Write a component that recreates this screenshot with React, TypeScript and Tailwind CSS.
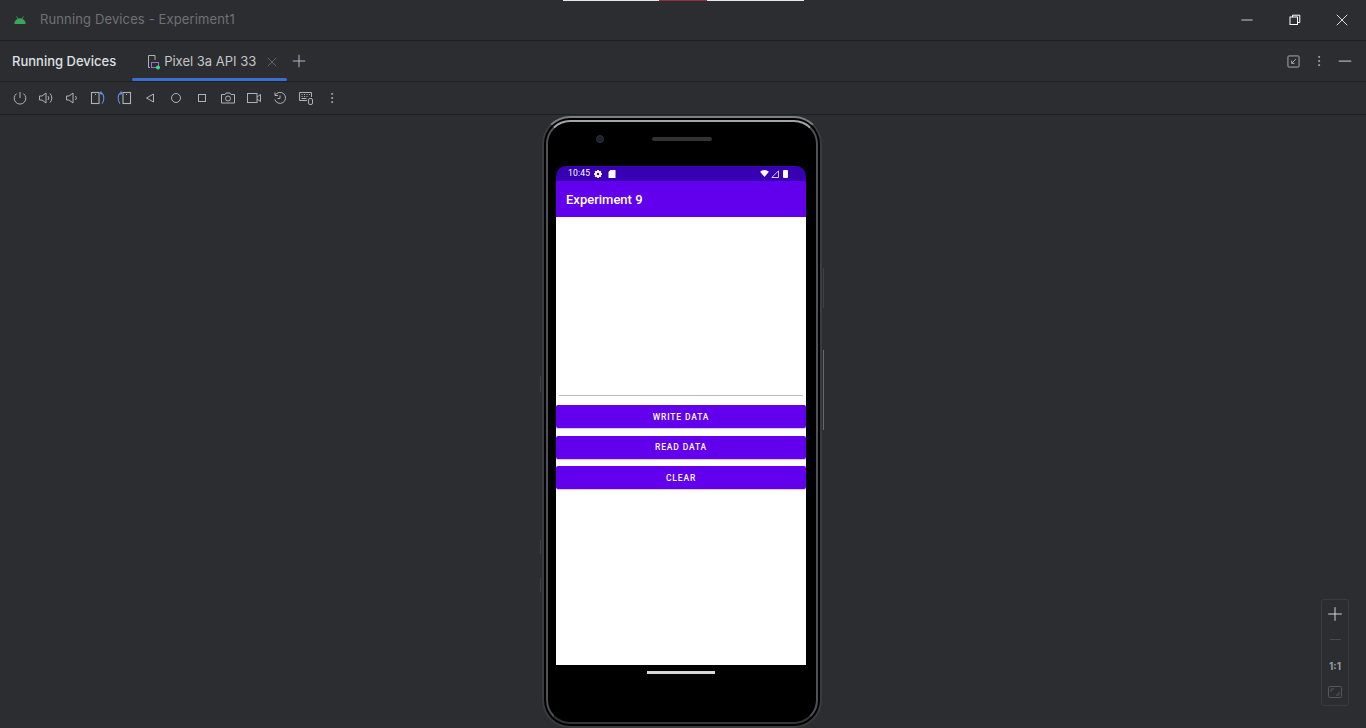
import { Plus, X, Minus, MoreVertical } from 'lucide-react'

const iconClass = 'w-4 h-4'

function Icon({ children, color = '#afb1b3' }: { children: React.ReactNode; color?: string }) {
  return (
    <svg viewBox="0 0 16 16" fill="none" stroke={color} strokeWidth="1" className={iconClass}>
      {children}
    </svg>
  )
}

const BLUE = '#5c8fe8'

const toolbar = [
  { x: 20, el: <Icon><path d="M8 2v6" /><path d="M4.600 3.600a5.800 5.800 0 1 0 6.800 0" /></Icon> },
  { x: 46, el: <Icon><path d="M1.500 6h2.500L8 3v10L4 10H1.500z" /><path d="M10 6a3 3 0 0 1 0 4" /><path d="M12 3.500a6.500 6.500 0 0 1 0 9" /></Icon> },
  { x: 71, el: <Icon><path d="M2.500 6h2.500L9 3v10L5 10H2.500z" /><path d="M11.500 6a3 3 0 0 1 0 4" /></Icon> },
  {
    x: 98,
    el: (
      <svg viewBox="0 0 16 16" fill="none" strokeWidth="1.100" className={iconClass}>
        <rect x="1.500" y="2.500" width="7.500" height="11" stroke="#afb1b3" />
        <path d="M5 4.500h1" stroke="#afb1b3" />
        <path d="M10.500 3h1c3 1.500 3 8 .5 10.500M11.500 1.500l-1.500 1.500 1.500 1.500" stroke={BLUE} />
      </svg>
    ),
  },
  {
    x: 124,
    el: (
      <svg viewBox="0 0 16 16" fill="none" strokeWidth="1.100" className={iconClass}>
        <rect x="7" y="2.500" width="7.500" height="11" stroke="#afb1b3" />
        <path d="M10 4.500h1" stroke="#afb1b3" />
        <path d="M5.500 3h-1c-3 1.500-3 8-.5 10.500M4.500 1.500l1.500 1.500-1.500 1.500" stroke={BLUE} />
      </svg>
    ),
  },
  { x: 150, el: <Icon><path d="M11.500 4v8L4.500 8z" /></Icon> },
  { x: 176, el: <Icon><circle cx="8" cy="8" r="4.500" /></Icon> },
  { x: 202, el: <Icon><rect x="4.500" y="4.500" width="7" height="7" /></Icon> },
  { x: 228, el: <Icon><path d="M1.500 4.500h3.500l1-1.500h4l1 1.500h3.500v8.500h-13z" /><circle cx="8" cy="8.500" r="2.500" /></Icon> },
  { x: 254, el: <Icon><rect x="1.500" y="3.500" width="9.500" height="9" /><path d="M11 7l3.500-2.500v7L11 9" /></Icon> },
  { x: 280, el: <Icon><path d="M3 2.500v3h3" /><path d="M3.200 5.300A5.500 5.500 0 1 1 2.800 9.500" /><path d="M8 5.500V8.500H5.500" /></Icon> },
  {
    x: 306,
    el: (
      <Icon>
        <path d="M9 10.500H1.500v-8h12v4.500" />
        <path d="M3.500 4.500h1M6 4.500h1M8.500 4.500h1M11 4.500h1M3.500 6.500h1M6 6.500h1M8.500 6.500h1M3.500 8.500h5" />
        <rect x="10.500" y="8.500" width="4" height="6" rx="1.500" />
      </Icon>
    ),
  },
]

function PhoneButton({ label }: { label: string }) {
  return (
    <div
      className="h-[23px] w-full pt-px rounded-[2px] bg-[#6200ee] text-white text-[8.500px] font-medium tracking-[0.85px] flex items-center justify-center shadow-[0_1px_1px_rgba(98,0,238,0.25)]"
      style={{ fontFamily: 'Roboto, "Liberation Sans", sans-serif' }}
    >
      {label}
    </div>
  )
}

export default function App() {
  return (
    <div
      className="relative w-[1366px] h-[728px] overflow-hidden bg-[#2b2d30] flex flex-col"
      style={{ fontFamily: 'Inter, "Liberation Sans", sans-serif' }}
    >
      {/* strip of another window at the top edge */}
      <div className="absolute top-0 left-[563px] w-[241px] h-px bg-[#e8e8e8] flex justify-center">
        <div className="w-[48px] h-px mr-[2px] bg-[#9c2b45]" />
      </div>

      {/* title bar */}
      <div className="h-[41px] shrink-0 border-b border-[#1e1f22] flex items-center">
        <svg viewBox="0 0 16 16" className="w-[14px] h-[14px] ml-[13px]" fill="#37a85a">
          <path d="M1.500 12.500a6.500 6.500 0 0 1 13 0z" />
          <path d="M4 4l2 3M12 4l-2 3" stroke="#37a85a" strokeWidth="1" />
        </svg>
        <span className="ml-[13px] text-[13px] tracking-[0.13px] text-[#6f7175]">Running Devices - Experiment1</span>
        <div className="ml-auto flex items-center text-white">
          <Minus className="w-[18px] h-[18px] mr-[33px]" strokeWidth={1} />
          <svg viewBox="0 0 12 12" fill="none" stroke="currentColor" className="w-[12px] h-[12px] mr-[31px]">
            <rect x="1" y="3" width="7.500" height="7.500" />
            <path d="M3.500 3V1.200h7.300v7.300H8.500" />
          </svg>
          <X className="w-[20px] h-[20px] mr-[14px]" strokeWidth={1} />
        </div>
      </div>

      {/* tab bar */}
      <div className="h-[41px] shrink-0 border-b border-[#1e1f22] flex items-stretch">
        <div className="ml-3 pt-px flex items-center text-[13px] font-medium text-[#dfe1e5]">Running Devices</div>
        <div className="relative ml-4 w-[155px] pt-px flex items-center">
          <svg viewBox="0 0 16 16" fill="none" strokeWidth="1" className="w-4 h-4 ml-[13px]">
            <path d="M10 6V1.500H3.500v12H5" stroke="#afb1b3" />
            <rect x="6.500" y="8.500" width="7" height="5" stroke="#9b72c9" />
            <circle cx="13" cy="13.500" r="2" fill="#3ddc84" />
          </svg>
          <span className="ml-[3px] text-[13px] text-[#c5c7cb]">Pixel 3a API 33</span>
          <X className="w-4 h-4 ml-[8px] text-[#6f7175]" strokeWidth={1.200} />
          <div className="absolute left-0 right-0 bottom-0 h-[3px] rounded-[2px] bg-[#3a6fd0]" />
        </div>
        <div className="ml-[2px] flex items-center">
          <Plus className="w-5 h-5 text-[#ced0d6]" strokeWidth={1} />
        </div>
        <div className="ml-auto flex items-center text-[#afb1b3]">
          <svg viewBox="0 0 14 14" fill="none" stroke="currentColor" className="w-[13px] h-[13px]">
            <rect x="1" y="1" width="12" height="12" rx="1" />
            <path d="M9.500 4.500L5 9M5 6v3h3" />
          </svg>
          <MoreVertical className="w-[14px] h-[14px] ml-[12px]" strokeWidth={1.500} />
          <Minus className="w-5 h-5 ml-[9px] mr-[11px]" strokeWidth={1.500} />
        </div>
      </div>

      {/* device toolbar */}
      <div className="h-[33px] shrink-0 border-b border-[#1e1f22] flex items-center pl-3">
        {toolbar.map((t) => (
          <div key={t.x} className="w-[26px] shrink-0 flex justify-start">
            {t.el}
          </div>
        ))}
        <MoreVertical className="w-[14px] h-[14px] ml-px text-[#afb1b3]" strokeWidth={1.500} />
      </div>

      {/* canvas */}
      <div className="flex-1 flex justify-center pt-px relative">
        <div className="relative w-[280px] h-[612px] ml-[-2px] rounded-[28px] bg-black border-[2px] border-[#3a3b3e] border-t-[#7d7e80] p-[2px] shrink-0">
          {/* hardware buttons */}
          <div className="absolute -right-[4px] top-[150px] w-px h-[40px] bg-[#3f4043]" />
          <div className="absolute -right-[4px] top-[232px] w-px h-[80px] bg-[#66686b]" />
          <div className="absolute -left-[4px] top-[258px] w-px h-[16px] bg-[#3f4043]" />
          <div className="absolute -left-[4px] top-[422px] w-px h-[14px] bg-[#3f4043]" />
          <div className="absolute -left-[4px] top-[460px] w-px h-[14px] bg-[#3f4043]" />
          <div className="absolute left-[118px] -bottom-[4px] w-[36px] h-px bg-[#3f4043]" />

          <div className="w-full h-full rounded-[24px] bg-black border-[2px] border-[#505154] border-t-[#a4a5a7] border-b-[#333436] flex flex-col items-center">
            <div className="h-[44px] w-full shrink-0 flex items-start pt-[13px]">
              <div className="ml-[48px] w-[8px] h-[8px] rounded-full bg-[#1c2029] border border-[#2f3340]" />
              <div className="ml-[48px] mt-[2px] w-[60px] h-[4px] rounded-[2px] bg-[#333333]" />
            </div>

            {/* screen */}
            <div className="w-[250px] h-[499px] mr-[2px] flex flex-col shrink-0">
              <div className="h-[15px] rounded-t-[10px] bg-[#3700b3] flex items-center pl-3 pr-[18px] text-white">
                <span className="text-[8.500px] tracking-[0.2px]" style={{ fontFamily: 'Roboto, "Liberation Sans", sans-serif' }}>10:45</span>
                <svg viewBox="0 0 10 10" className="w-[8px] h-[8px] ml-[4px]" fill="white">
                  <path d="M4 0h2l.4 1.500 1.400-.7 1.400 1.400-.7 1.400L10 4v2l-1.500.4.7 1.400-1.400 1.400-1.400-.7L6 10H4l-.4-1.500-1.400.7L.8 7.800l.7-1.400L0 6V4l1.500-.4-.7-1.400L2.200.8l1.400.7z" />
                  <circle cx="5" cy="5" r="1.500" fill="#3700b3" />
                </svg>
                <svg viewBox="0 0 8 8" className="w-[8px] h-[8px] ml-[6px]" fill="white">
                  <path d="M2.500 0H7.500v8H.5V2z" />
                </svg>
                <div className="ml-auto flex items-center gap-[2px]">
                  <svg viewBox="0 0 10 8" className="w-[9px] h-[7px]" fill="white">
                    <path d="M0 2a7.500 7.500 0 0 1 10 0L5 8z" />
                  </svg>
                  <svg viewBox="0 0 8 8" className="w-[8px] h-[8px]" fill="none" stroke="white" strokeWidth="0.800">
                    <path d="M7.500 .8V7.500H.8z" />
                  </svg>
                  <div className="ml-[2px] w-[5px] h-[8px] rounded-[1px] bg-white" />
                </div>
              </div>
              <div className="h-9 bg-[#6200ee] flex items-center pl-[10px] pt-px text-white text-[13px] font-medium" style={{ fontFamily: 'Roboto, "Liberation Sans", sans-serif' }}>
                Experiment 9
              </div>
              <div className="flex-1 bg-white flex flex-col pt-[178px]">
                <div className="mx-[3px] h-px bg-[#bdbdbd]" />
                <div className="mt-[9px] flex flex-col gap-[7.500px]">
                  <PhoneButton label="WRITE DATA" />
                  <PhoneButton label="READ DATA" />
                  <PhoneButton label="CLEAR" />
                </div>
              </div>
            </div>

            <div className="mt-[6px] mr-[2px] w-[68px] h-[3px] bg-[#d8d8d8]" />
          </div>
        </div>

        {/* zoom control */}
        <div className="absolute left-[1321px] top-[484px] w-[28px] h-[107px] rounded-[3px] border border-[#393b40] flex flex-col items-center text-[#dfe1e5]">
          <Plus className="w-[22px] h-[22px] mt-[3px]" strokeWidth={1} />
          <Minus className="w-[17px] h-[17px] mt-[6px] text-[#54565a]" strokeWidth={1} />
          <span className="mt-[12px] text-[10px] font-bold leading-[12px] text-[#9a9c9f]">1:1</span>
          <svg viewBox="0 0 14 12" fill="none" stroke="#54565a" className="w-[14px] h-[12px] mt-[14px]">
            <rect x=".5" y=".5" width="13" height="11" rx="1" />
            <path d="M3 6V3h3M11 6v3H8" />
          </svg>
        </div>
      </div>
    </div>
  )
}
